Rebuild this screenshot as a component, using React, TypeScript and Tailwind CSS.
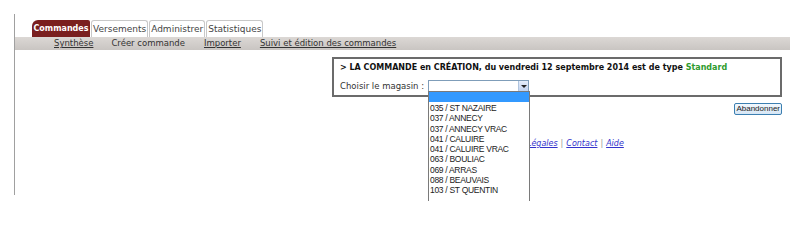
import React from 'react';

const tabs = ['Commandes', 'Versements', 'Administrer', 'Statistiques'];

const magasins = [
  '035 / ST NAZAIRE',
  '037 / ANNECY',
  '037 / ANNECY VRAC',
  '041 / CALUIRE',
  '041 / CALUIRE VRAC',
  '063 / BOULIAC',
  '069 / ARRAS',
  '088 / BEAUVAIS',
  '103 / ST QUENTIN',
];

export default function App() {
  return (
    <div className="h-[201px] w-[800px] overflow-hidden bg-white pl-[14px] pt-[14px] font-['DejaVu_Sans',sans-serif] text-[#333]">
      <div className="h-[181px] w-[776px] border-l border-[#a0a0a0]">
        {/* Tabs */}
        <div className="flex pl-[17px] pt-[6px] text-[9px] leading-none">
          {tabs.map((tab, i) => (
            <div
              key={tab}
              className={
                i === 0
                  ? 'flex h-[17px] w-[58px] items-center justify-center rounded-tl-[6px] rounded-tr-[2px] bg-[#7a1f1f] text-[8px] font-bold text-white'
                  : 'ml-[1px] flex h-[17px] items-center rounded-t-[3px] border border-b-0 border-[#c8c8c8] bg-white px-[1px] text-[#444]'
              }
            >
              {tab}
            </div>
          ))}
        </div>

        {/* Sub menu */}
        <div className="flex h-[13px] items-center bg-gradient-to-b from-[#dcd8d5] to-[#c9c5c2] pl-[39px] text-[8.5px] leading-none text-[#333]">
          <span className="underline">Synthèse</span>
          <span className="ml-[18px]">Créer commande</span>
          <span className="ml-[19px] underline">Importer</span>
          <span className="ml-[19px] underline">Suivi et édition des commandes</span>
        </div>

        {/* Order box */}
        <div className="ml-[317px] mt-[7px] h-[40px] w-[450px] border-2 border-[#6b6b6b] pl-[6px] pt-[3px]">
          <div className="text-[8px] font-bold leading-[12px] text-[#111]">
            &gt; LA COMMANDE en CRÉATION, du vendredi 12 septembre 2014 est de type{' '}
            <span className="text-[#2e9b2e]">Standard</span>
          </div>
          <div className="mt-[6px] flex items-center text-[8.5px] leading-none text-[#333]">
            <span>Choisir le magasin :</span>
            <div className="relative ml-[4px] h-[12px] w-[101px] border border-[#7f9db9] bg-white">
              <div className="absolute right-0 top-0 flex h-[10px] w-[10px] items-center justify-center border-l border-[#b0c4de] bg-gradient-to-b from-[#e6eefb] to-[#c3d3ef]">
                <div className="h-0 w-0 border-x-[3px] border-t-[3px] border-x-transparent border-t-[#222]" />
              </div>
              {/* Open list */}
              <div className="absolute left-[-1px] top-[10px] z-10 h-[120px] w-[102px] border border-[#7a7a7a] bg-white font-['Liberation_Sans',Arial,sans-serif] text-[8.5px] leading-[10.3px] tracking-[-0.3px] text-[#222]">
                <div className="mb-[1px] h-[10px] bg-[#3399ff]" />
                {magasins.map((m) => (
                  <div key={m} className="whitespace-nowrap pl-[1px]">
                    {m}
                  </div>
                ))}
              </div>
            </div>
          </div>
        </div>

        {/* Button */}
        <div className="flex w-[767px] justify-end pt-[6px]">
          <button className="h-[12px] rounded-[2px] border border-[#3c7fb1] bg-gradient-to-b from-[#f2f8fd] to-[#d6e6f5] px-[1px] font-['Liberation_Sans',Arial,sans-serif] text-[8px] leading-none text-[#222]">
            Abandonner
          </button>
        </div>

        {/* Footer links */}
        <div className="mt-[25px] pl-[473px] text-[8px] italic leading-none text-[#3333cc]">
          <span className="underline">Mentions Légales</span>
          <span className="mx-[3px] not-italic text-[#999]">|</span>
          <span className="underline">Contact</span>
          <span className="mx-[3px] not-italic text-[#999]">|</span>
          <span className="underline">Aide</span>
        </div>
      </div>
    </div>
  );
}
